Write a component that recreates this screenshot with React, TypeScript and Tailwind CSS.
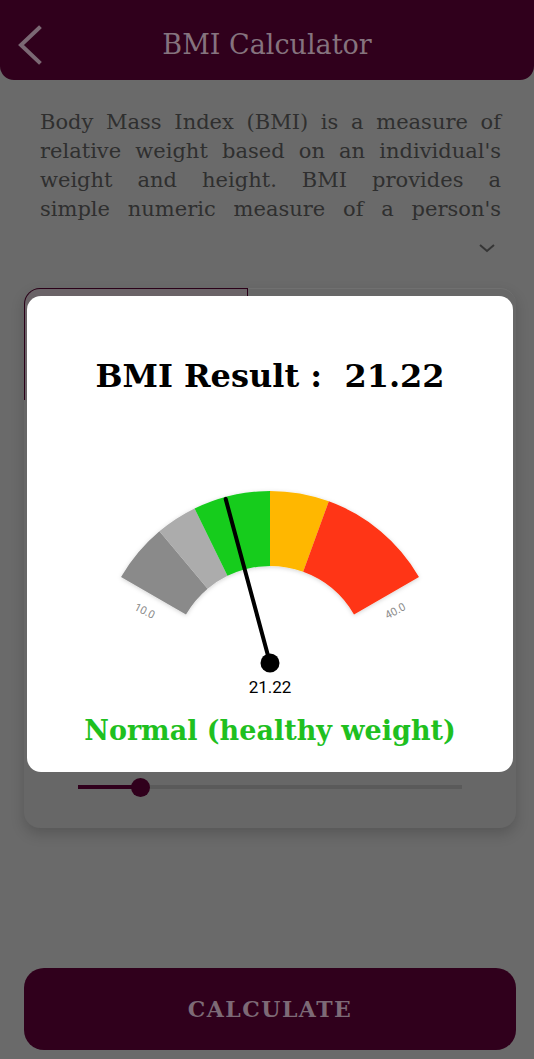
import React from "react";

const CX = 243;
const CY = 182;
const R_OUT = 172;
const R_IN = 97;

type Band = { from: number; to: number; color: string };

const bands: Band[] = [
  { from: 10, to: 15, color: "#8a8a8a" },
  { from: 15, to: 18.5, color: "#acacac" },
  { from: 18.5, to: 25, color: "#14cc1e" },
  { from: 25, to: 30, color: "#ffb703" },
  { from: 30, to: 40, color: "#ff3512" },
];

// 10 sits at 150deg, 40 at 30deg
const angleOf = (v: number) => 150 - (v - 10) * 4;

function pt(deg: number, r: number) {
  const a = (deg * Math.PI) / 180;
  return [CX + r * Math.cos(a), CY - r * Math.sin(a)];
}

function bandPath(b: Band) {
  const a1 = angleOf(b.from);
  const a2 = angleOf(b.to);
  const [x1, y1] = pt(a1, R_OUT);
  const [x2, y2] = pt(a2, R_OUT);
  const [x3, y3] = pt(a2, R_IN);
  const [x4, y4] = pt(a1, R_IN);
  return `M${x1} ${y1} A${R_OUT} ${R_OUT} 0 0 1 ${x2} ${y2} L${x3} ${y3} A${R_IN} ${R_IN} 0 0 0 ${x4} ${y4} Z`;
}

function Gauge({ value }: { value: number }) {
  const [nx, ny] = pt(angleOf(value), 170);
  const [lx, ly] = pt(159, 136);
  const [rx, ry] = pt(21, 136);

  return (
    <svg width="486" height="196" viewBox="0 0 486 196" className="block">
      <defs>
        <filter id="soft" x="-10%" y="-10%" width="120%" height="130%">
          <feDropShadow dx="0" dy="1" stdDeviation="2" floodColor="#000" floodOpacity="0.18" />
        </filter>
      </defs>
      <g filter="url(#soft)">
        {bands.map((b) => (
          <path key={b.from} d={bandPath(b)} fill={b.color} />
        ))}
      </g>
      <text
        x={lx}
        y={ly}
        fontSize="11"
        fill="#8c8c8c"
        textAnchor="middle"
        fontFamily="Roboto, sans-serif"
        transform={`rotate(27 ${lx} ${ly})`}
      >
        10.0
      </text>
      <text
        x={rx}
        y={ry}
        fontSize="11"
        fill="#8c8c8c"
        textAnchor="middle"
        fontFamily="Roboto, sans-serif"
        transform={`rotate(-28 ${rx} ${ry})`}
      >
        40.0
      </text>
      <line x1={CX} y1={CY} x2={nx} y2={ny} stroke="#000" strokeWidth="4" strokeLinecap="round" />
      <circle cx={CX} cy={CY} r="9.5" fill="#000" />
    </svg>
  );
}

const lines = [
  "Body Mass Index (BMI) is a measure of",
  "relative weight based on an individual's",
  "weight and height. BMI provides a",
  "simple numeric measure of a person's",
];

export default function App() {
  return (
    <div
      className="relative min-h-[1059px] w-full overflow-hidden bg-[#6a6a6a]"
      style={{ fontFamily: '"DejaVu Serif", serif' }}
    >
      <header className="relative flex h-[80px] items-center justify-center rounded-b-[14px] bg-[#30001c] pt-[10px]">
        <svg
          width="26"
          height="40"
          viewBox="0 0 26 40"
          className="absolute left-[16px] top-[25px]"
          fill="none"
          stroke="#7b6874"
          strokeWidth="4"
          strokeLinecap="square"
        >
          <path d="M23 3 L5 20 L23 37" />
        </svg>
        <h1 className="text-[27px] text-[#85737e]">BMI Calculator</h1>
      </header>

      <div className="pl-[40px] pr-[33px] pt-[28px] text-[21px] leading-[29px] text-[#2f2f2f]">
        {lines.map((l) => (
          <div key={l} className="whitespace-nowrap text-justify [text-align-last:justify]">
            {l}
          </div>
        ))}
      </div>

      <div className="flex justify-end px-[38px] pt-[18px]">
        <svg width="18" height="12" viewBox="0 0 18 12" fill="none" stroke="#353535" strokeWidth="2">
          <path d="M2 3 L9 9 L16 3" />
        </svg>
      </div>

      <section className="ml-[24px] mt-[34px] h-[540px] w-[492px] rounded-[16px] bg-[#676767] shadow-[0_6px_14px_rgba(0,0,0,0.18)]">
        <div className="flex h-[112px]">
          <div className="w-[224px] rounded-tl-[16px] border-[1.5px] border-b-0 border-[#2a0018] bg-[#6a6367]" />
          <div className="flex-1 rounded-tr-[16px] border-t border-[#707070]" />
        </div>
        <div className="flex items-center px-[54px] pt-[385px]">
          <div className="relative h-[4px] flex-1 bg-[#5a5a5a]">
            <div className="absolute left-0 top-0 h-[4px] w-[62px] bg-[#30001c]" />
            <div className="absolute left-[53px] top-[-7.5px] h-[19px] w-[19px] rounded-full bg-[#30001c]" />
          </div>
        </div>
      </section>

      <button className="ml-[24px] mt-[140px] flex h-[82px] w-[492px] items-center justify-center rounded-[20px] bg-[#30001c] text-[22px] font-bold tracking-[1.5px] text-[#7d6a76]">
        CALCULATE
      </button>

      <div className="absolute left-[27px] top-[296px] flex h-[476px] w-[486px] flex-col items-center rounded-[14px] bg-white">
        <div className="pt-[58px] text-[32px] font-bold leading-[44px] text-black">
          BMI Result :&nbsp;&nbsp;21.22
        </div>
        <div className="mt-[83px]">
          <Gauge value={21.22} />
        </div>
        <div
          className="-mt-[1px] text-[17px] leading-[22px] text-black"
          style={{ fontFamily: "Roboto, sans-serif" }}
        >
          21.22
        </div>
        <div className="mt-[15px] text-[27px] font-bold leading-[36px] text-[#1fc01f]">
          Normal (healthy weight)
        </div>
      </div>
    </div>
  );
}
